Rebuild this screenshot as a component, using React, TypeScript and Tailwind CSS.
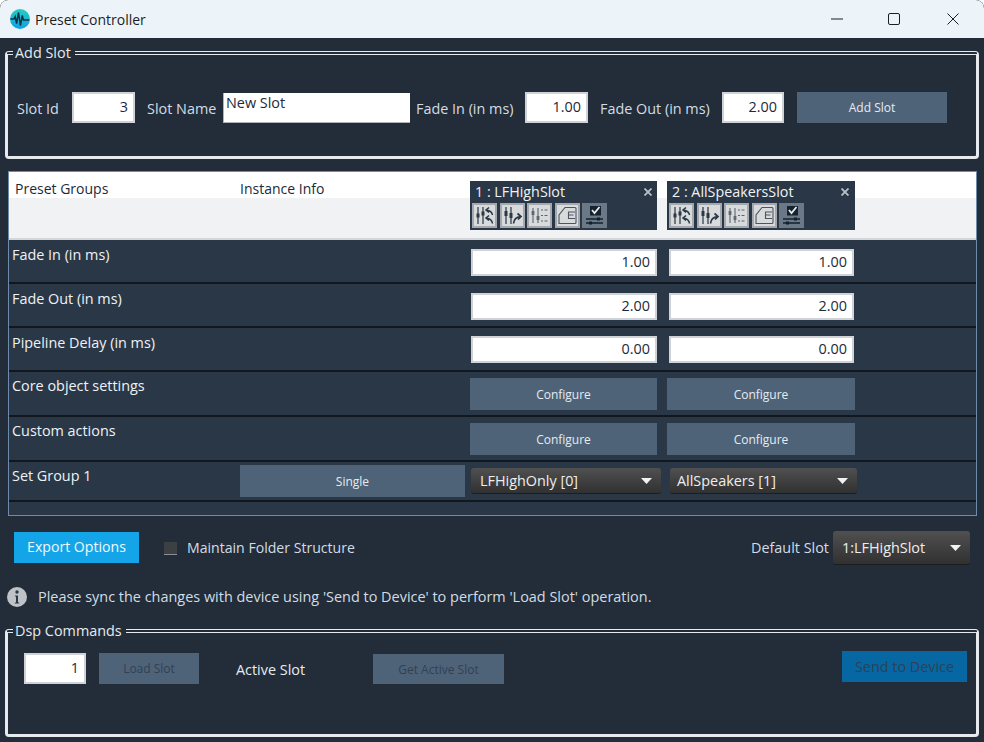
import React from "react";

const font = "font-['Open_Sans','Noto_Sans',sans-serif]";

function ValueBox({ value, className = "" }: { value: string; className?: string }) {
  return (
    <div className={`bg-white border-2 border-[#cfd3d7] text-right text-[14.4px] leading-[22px] text-[#1c2a3a] pr-[5px] ${className}`}>
      {value}
    </div>
  );
}

function Btn({ label, className = "" }: { label: string; className?: string }) {
  return (
    <div className={`bg-[#4f6378] text-[#e6ebf0] text-[12px] pt-[1px] flex items-center justify-center ${className}`}>
      {label}
    </div>
  );
}

function Drop({ label, className = "" }: { label: string; className?: string }) {
  return (
    <div className={`rounded-[3px] bg-gradient-to-b from-[#505050] to-[#313131] border-b border-[#1d1d1d] text-[#eeeeee] text-[14.4px] flex items-center justify-between pr-[9px] ${className}`}>
      <span>{label}</span>
      <svg width="11" height="6" viewBox="0 0 11 6"><path d="M0 0h11L5.5 6z" fill="#f2f2f2" /></svg>
    </div>
  );
}

function GroupBox({ title, className = "", children }: { title: string; className?: string; children: React.ReactNode }) {
  return (
    <fieldset className={`border-x-[3px] border-b-[3px] border-t-[4px] [border-top-style:double] border-[#e6eaed] rounded-[4px] ${className}`}>
      <legend className="ml-[5px] pl-[2px] pr-[4px] text-[14.4px] leading-[16px] text-[#e6ebf0]">{title}</legend>
      {children}
    </fieldset>
  );
}

function Tile({ active, children }: { active?: boolean; children: React.ReactNode }) {
  return (
    <div className={`w-[25px] h-[25px] border-2 ${active ? "bg-[#6b7886] border-[#6b7886]" : "bg-[#d8dadb] border-[#a3a9af]"}`}>
      <svg width="21" height="21" viewBox="0 0 21 21" fill="none" stroke={active ? "#10202f" : "#2a3746"} strokeWidth="1.2">
        {children}
      </svg>
    </div>
  );
}

function Sliders() {
  return (
    <>
      <path d="M4 2v17M9 2v17" />
      <path d="M4 8.500v4M9 6.500v4" strokeWidth="3" />
    </>
  );
}

function SlotCard({ title, className = "", closeClass = "" }: { title: string; className?: string; closeClass?: string }) {
  return (
    <div className={`bg-[#2a3746] h-[49px] pl-[2px] ${className}`}>
      <div className="flex justify-between items-center h-[22px] pl-[3px]">
        <span className="text-[14.3px] leading-[20px] text-[#f0f3f6]">{title}</span>
        <svg className={closeClass} width="8" height="8" viewBox="0 0 8 8" stroke="#b9c0c7" strokeWidth="1.8"><path d="M0.5 0.5l7 7M7.5 0.5l-7 7" /></svg>
      </div>
      <div className="flex gap-[2.5px]">
        <Tile>
          <Sliders />
          <path d="M18.500 10C18 7 16 5.500 12.500 5M15 2.500L12 5l3 2.500" strokeWidth="1.500" />
          <path d="M18.500 18.500C18 15 16 13.500 12.500 13M15 10.500L12 13l3 2.500" strokeWidth="1.500" />
        </Tile>
        <Tile>
          <path d="M4 2v17M9 2v17" />
          <path d="M4 6v5M9 8v5" strokeWidth="3" />
          <path d="M11.500 18.500C12 14 14 12 18.500 11.500M15.500 8.500l3.500 3-3 3" strokeWidth="1.700" />
        </Tile>
        <Tile>
          <g stroke="#5b6670">
            <path d="M4 3v15M9 3v15" strokeWidth="1.100" />
            <path d="M4 6v4M9 11v4" strokeWidth="2.800" />
            <path d="M12 5h2M15.500 5h3M12 10.500h2M15.500 10.500h3M12 16h2M15.500 16h3" strokeWidth="1.200" />
          </g>
        </Tile>
        <Tile>
          <g stroke="#4a5560" strokeWidth="1.100">
            <path d="M2 18.500V10L8 2.500h10a1 1 0 0 1 1 1v14a1 1 0 0 1-1 1z" />
            <path d="M18 7h-6.500v6.500H18M11.500 10h5" />
          </g>
        </Tile>
        <Tile active>
          <rect x="6" y="1" width="11" height="9.500" fill="#15222f" stroke="none" />
          <path d="M8 5l2.500 3 5-6" stroke="#e8ecef" strokeWidth="1.800" />
          <path d="M2 14h17M2 18h17" strokeWidth="1.300" />
          <path d="M13 12.500h3v3h-3zM5 16.500h3v3H5z" fill="#10202f" stroke="none" />
        </Tile>
      </div>
    </div>
  );
}

function Row({ label, height, labelPad = "pt-[5px]", middle, children }: { label: string; height: string; labelPad?: string; middle?: React.ReactNode; children: React.ReactNode }) {
  return (
    <div className={`grid grid-cols-[228px_230px_197px_1fr] items-start bg-[#2a3746] border-b-2 border-[#10171f] pl-[3px] ${height}`}>
      <div className={`text-[14.4px] leading-[20px] text-[#eef2f6] ${labelPad}`}>{label}</div>
      <div>{middle}</div>
      {children}
    </div>
  );
}

export default function App() {
  return (
    <div className={`${font} w-[984px] h-[742px] overflow-hidden bg-[#222d39] rounded-t-[8px]`}>
      <div className="h-[38px] bg-[#edf4f9] flex items-center rounded-t-[8px]">
        <svg className="ml-[10px]" width="20" height="20" viewBox="0 0 20 20">
          <defs>
            <linearGradient id="lg" x1="0" y1="0" x2="0" y2="1">
              <stop offset="0" stopColor="#26cdc4" />
              <stop offset="1" stopColor="#129fe4" />
            </linearGradient>
          </defs>
          <circle cx="10" cy="10" r="10" fill="url(#lg)" />
          <path d="M0.500 10h3.500l1.200-2.500 1.400 7 1.900-11 1.900 13 1.900-10 1 4.500h6" fill="none" stroke="#0e3444" strokeWidth="1.500" />
        </svg>
        <span className="ml-[5px] text-[14px] text-[#1b1f24]">Preset Controller</span>
        <div className="ml-auto flex items-center mr-[1px]">
          <div className="w-[56px] flex justify-center">
            <svg width="12" height="12" viewBox="0 0 12 12" stroke="#1b1f24" strokeWidth="1"><path d="M0 6h12" /></svg>
          </div>
          <div className="w-[58px] flex justify-center">
            <svg width="12" height="12" viewBox="0 0 12 12" fill="none" stroke="#1b1f24" strokeWidth="1"><rect x="0.500" y="0.500" width="11" height="11" rx="1.500" /></svg>
          </div>
          <div className="w-[60px] flex justify-center">
            <svg width="12" height="12" viewBox="0 0 12 12" stroke="#1b1f24" strokeWidth="1"><path d="M0.500 0.500l11 11M11.500 0.500l-11 11" /></svg>
          </div>
        </div>
      </div>

      <GroupBox title="Add Slot" className="mt-[7px] ml-[5px] w-[974px] h-[114px]">
        <div className="flex items-start pt-[31px] text-[14.4px] text-[#d3dce5]">
          <span className="ml-[9px] w-[55px] leading-[33px]">Slot Id</span>
          <ValueBox value="3" className="w-[63px] h-[31px] leading-[25px]" />
          <span className="ml-[12px] w-[76px] leading-[33px]">Slot Name</span>
          <div className="w-[187px] h-[30px] mt-[1px] bg-white border-l border-b border-[#aeb4ba] text-[#1c2a3a] leading-[20px] pl-[2px]">New Slot</div>
          <span className="ml-[6px] w-[109px] leading-[33px]">Fade In (in ms)</span>
          <ValueBox value="1.00" className="w-[63px] h-[31px] leading-[25px]" />
          <span className="ml-[12px] w-[122px] leading-[33px]">Fade Out (in ms)</span>
          <ValueBox value="2.00" className="w-[62px] h-[31px] leading-[25px]" />
          <Btn label="Add Slot" className="ml-[13px] w-[150px] h-[31px]" />
        </div>
      </GroupBox>

      <div className="mt-[12px] ml-[8px] w-[969px] h-[345px] border border-[#6f8bab] bg-[#2a3746] overflow-hidden">
        <div className="h-[68px] border-b-2 border-[#d4d6d9] bg-gradient-to-b from-white from-[39%] to-[#f1f2f4] to-[39%] grid grid-cols-[231px_230px_197px_1fr] pl-[6px] items-start text-[14px] text-[#1c2a3a]">
          <div className="leading-[20px] pt-[7px]">Preset Groups</div>
          <div className="leading-[20px] pt-[7px] -ml-[6px]">Instance Info</div>
          <SlotCard title="1 : LFHighSlot" className="mt-[9px] -ml-[6px] w-[187px]" closeClass="mr-[5px]" />
          <SlotCard title="2 : AllSpeakersSlot" className="mt-[9px] -ml-[6px] w-[188px]" closeClass="mr-[6px]" />
        </div>
        <Row label="Fade In (in ms)" height="h-[44px]">
          <ValueBox value="1.00" className="mt-[9px] ml-[1px] w-[186px] h-[27px]" />
          <ValueBox value="1.00" className="mt-[9px] ml-[2px] w-[185px] h-[27px]" />
        </Row>
        <Row label="Fade Out (in ms)" height="h-[44px]">
          <ValueBox value="2.00" className="mt-[9px] ml-[1px] w-[186px] h-[27px]" />
          <ValueBox value="2.00" className="mt-[9px] ml-[2px] w-[185px] h-[27px]" />
        </Row>
        <Row label="Pipeline Delay (in ms)" height="h-[44px]">
          <ValueBox value="0.00" className="mt-[8px] ml-[1px] w-[186px] h-[27px]" />
          <ValueBox value="0.00" className="mt-[8px] ml-[2px] w-[185px] h-[27px]" />
        </Row>
        <Row label="Core object settings" height="h-[45px]" labelPad="pt-[4px]">
          <Btn label="Configure" className="mt-[6px] w-[187px] h-[32px]" />
          <Btn label="Configure" className="mt-[6px] w-[188px] h-[32px]" />
        </Row>
        <Row label="Custom actions" height="h-[45px]" labelPad="pt-[4px]">
          <Btn label="Configure" className="mt-[6px] w-[187px] h-[32px]" />
          <Btn label="Configure" className="mt-[6px] w-[188px] h-[32px]" />
        </Row>
        <Row label="Set Group 1" height="h-[40px]" labelPad="pt-[4px]" middle={<Btn label="Single" className="mt-[3px] w-[225px] h-[32px]" />}>
          <Drop label="LFHighOnly [0]" className="mt-[6px] ml-[1px] w-[190px] h-[26px] pl-[9px]" />
          <Drop label="AllSpeakers [1]" className="mt-[6px] ml-[3px] w-[187px] h-[26px] pl-[7px]" />
        </Row>
      </div>

      <div className="mt-[15px] h-[34px] flex items-start pl-[14px] pr-[14px] text-[14.1px] text-[#d3dce5]">
        <div className="mt-[1px] w-[125px] h-[31px] pb-[2px] bg-[#14a5e8] text-[#f2f8fc] flex items-center justify-center">Export Options</div>
        <div className="ml-[25px] mt-[11px] w-[13px] h-[13px] bg-[#3c3f43] border-b border-[#8b8f93]"></div>
        <span className="ml-[10px] leading-[34px]">Maintain Folder Structure</span>
        <span className="ml-auto leading-[34px] mr-[4px] text-[14.4px]">Default Slot</span>
        <Drop label="1:LFHighSlot" className="w-[137px] h-[34px] pl-[9px]" />
      </div>

      <div className="mt-[22px] h-[20px] flex items-center pl-[7px]">
        <svg width="20" height="20" viewBox="0 0 20 20">
          <circle cx="10" cy="10" r="10" fill="#bfc3c8" />
          <circle cx="10" cy="5" r="1.700" fill="#2a3746" />
          <path d="M8 8.500h3v7h1.200v1H7.800v-1H9v-6H8z" fill="#2a3746" />
        </svg>
        <span className="ml-[11px] -mt-[1px] text-[14.45px] text-[#d3dce5]">Please sync the changes with device using 'Send to Device' to perform 'Load Slot' operation.</span>
      </div>

      <GroupBox title="Dsp Commands" className="mt-[16px] ml-[5px] w-[974px] h-[114px]">
        <div className="flex items-start pt-[14px] text-[14.4px] text-[#d3dce5]">
          <ValueBox value="1" className="ml-[16px] w-[62px] h-[31px] leading-[25px]" />
          <Btn label="Load Slot" className="ml-[13px] w-[100px] h-[31px] !text-[#2f4156]" />
          <span className="ml-[37px] w-[137px] leading-[33px] text-[#e6ebf0]">Active Slot</span>
          <Btn label="Get Active Slot" className="mt-[1px] w-[131px] h-[30px] !text-[#2f4156]" />
          <div className="ml-auto mr-[9px] -mt-[2px] w-[125px] h-[31px] bg-[#0767a3] text-[#2b4258] flex items-center justify-center">Send to Device</div>
        </div>
      </GroupBox>
    </div>
  );
}
